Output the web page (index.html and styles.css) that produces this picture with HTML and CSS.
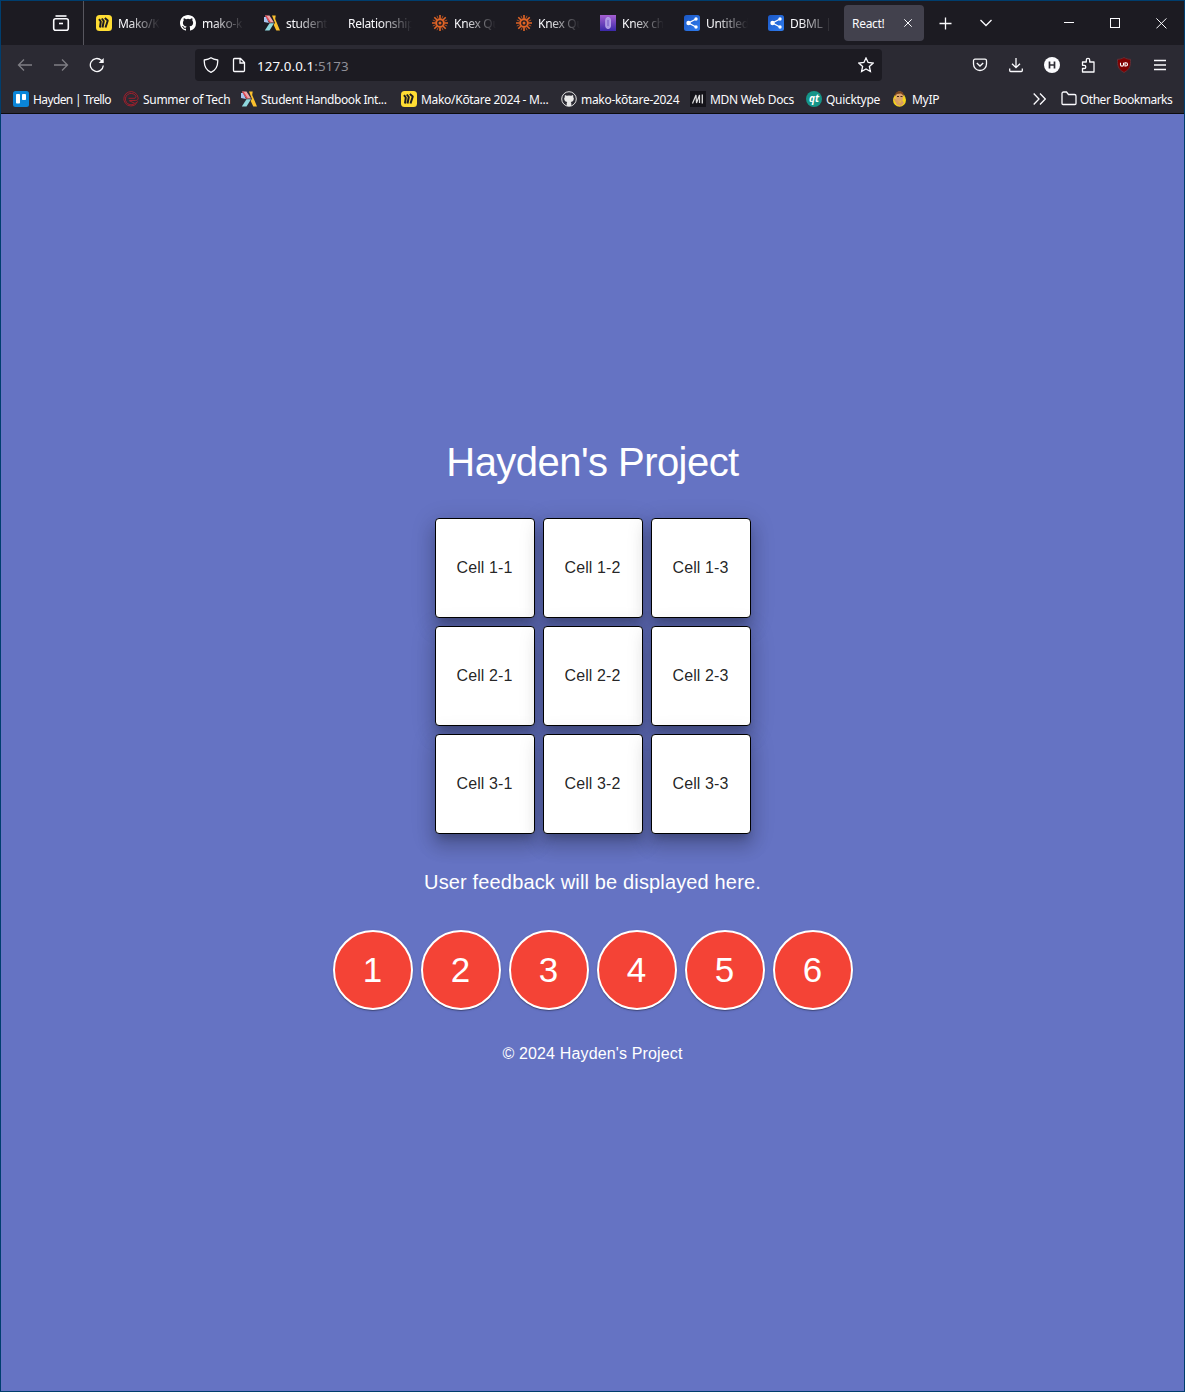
FILE: index.html
```html
<!DOCTYPE html>
<html lang="en">
<head>
<meta charset="utf-8">
<title>React!</title>
<link rel="stylesheet" href="styles.css">
</head>
<body>
<svg class="defs" width="0" height="0">
  <defs>
    <linearGradient id="violet" x1="0" y1="0" x2="0" y2="1"><stop offset="0" stop-color="#a45fd0"/><stop offset="1" stop-color="#3a28a8"/></linearGradient>
    <linearGradient id="azure" x1="0" y1="0" x2="1" y2="1"><stop offset="0" stop-color="#1b57c4"/><stop offset="1" stop-color="#2f7df0"/></linearGradient>
    <symbol id="miro" viewBox="0 0 16 16"><rect width="16" height="16" rx="3.500" fill="#ffdd33"/><path d="M3 4.200L4.800 6.500 4 12.500M5.800 3.500L7.800 6 6.500 12.500M8.800 3L11.800 5.500 9.500 12.500" fill="none" stroke="#1c1b22" stroke-width="2" stroke-linejoin="bevel"/></symbol>
    <symbol id="octo" viewBox="0 0 16 16"><path fill="#fff" d="M8 0C3.580 0 0 3.580 0 8c0 3.540 2.290 6.530 5.470 7.590.4.070.55-.17.55-.38 0-.19-.01-.82-.01-1.490-2.010.37-2.530-.49-2.690-.94-.09-.23-.48-.94-.82-1.130-.28-.15-.68-.52-.01-.53.63-.01 1.080.58 1.230.82.72 1.210 1.870.87 2.330.66.07-.52.28-.87.51-1.070-1.780-.2-3.640-.89-3.640-3.950 0-.87.31-1.590.82-2.150-.08-.2-.36-1.020.08-2.120 0 0 .67-.21 2.200.82a7.600 7.600 0 0 1 4 0c1.530-1.040 2.200-.82 2.200-.82.44 1.100.16 1.920.08 2.120.51.56.82 1.270.82 2.150 0 3.070-1.870 3.750-3.650 3.950.29.25.54.73.54 1.480 0 1.070-.01 1.930-.01 2.200 0 .21.15.46.55.38A8.010 8.010 0 0 0 16 8c0-4.420-3.580-8-8-8z"/></symbol>
    <symbol id="academy" viewBox="0 0 16 16"><path fill="#a9c4ee" d="M0 2h2l3 6-5-1z"/><path fill="#f0a3a8" d="M1 .5h4.500l4.500 7H5.500z"/><path fill="#e0424d" d="M1 .5h1.500L7 7.500H5.500z"/><path fill="#8fd8de" d="M5.500 8.200H10L5.500 15.500H.8z"/><path fill="#fbc02d" d="M8 .5h3.700l-.5 3.500L16 15.500h-3.700L9.700 10l1.200-2.300z"/></symbol>
    <symbol id="star8" viewBox="0 0 16 16"><g stroke="#e16426" fill="none"><path d="M8 0v4M8 12v4M0 8h4M12 8h4M2.300 2.300l3 3M10.700 10.700l3 3M13.700 2.300l-3 3M5.300 10.700l-3 3" stroke-width="1.600"/><path d="M5 .8l1.500 3.600M11 .8L9.500 4.400M5 15.200l1.500-3.600M11 15.200l-1.500-3.600M.8 5l3.600 1.500M.8 11l3.600-1.500M15.200 5l-3.600 1.500M15.200 11l-3.600-1.500" stroke-width=".7"/><circle cx="8" cy="8" r="3.700" stroke-width="1.700"/></g><circle cx="8" cy="8" r="1.500" fill="#e16426"/></symbol>
    <symbol id="share" viewBox="0 0 16 16"><rect width="16" height="16" rx="2.500" fill="url(#azure)"/><path d="M12 4L4.500 8l7.500 4" fill="none" stroke="#fff" stroke-width="1.300"/><g fill="#fff"><circle cx="12" cy="4" r="1.700"/><circle cx="4.500" cy="8" r="2.200"/><circle cx="12" cy="12" r="1.700"/></g></symbol>
  </defs>
</svg>
<div class="window">
  <div class="tabstrip">
    <div class="view"><svg width="18" height="18" viewBox="0 0 18 18" class="line"><path d="M3.500 2h11" stroke-width="1.600"/><rect x="1.700" y="4.700" width="14.600" height="11.600" rx="2" stroke-width="1.600"/><path d="M7 9.500h4" stroke-width="1.600"/></svg></div>
    <div class="tabs">
      <div class="tab"><svg class="fav"><use href="#miro"/></svg><span>Mako/K</span></div>
      <div class="tab"><svg class="fav"><use href="#octo"/></svg><span>mako-k</span></div>
      <div class="tab"><svg class="fav"><use href="#academy"/></svg><span>student</span></div>
      <div class="tab"><span>Relationship</span></div>
      <div class="tab"><svg class="fav"><use href="#star8"/></svg><span>Knex Qu</span></div>
      <div class="tab"><svg class="fav"><use href="#star8"/></svg><span>Knex Qu</span></div>
      <div class="tab"><svg class="fav" viewBox="0 0 16 16"><rect width="16" height="16" fill="url(#violet)"/><rect x="5.800" y="2.500" width="4.600" height="11" rx="2.300" fill="#a995e2" stroke="#b9a8ea"/><path d="M8 5v6" stroke="#7458c4"/></svg><span>Knex ch</span></div>
      <div class="tab"><svg class="fav"><use href="#share"/></svg><span>Untitled</span></div>
      <div class="tab"><svg class="fav"><use href="#share"/></svg><span>DBML |</span></div>
      <div class="tab active"><b>React!</b><svg width="8" height="8" viewBox="0 0 8 8" class="line thin"><path d="M.3.3l7.400 7.400M7.700.3L.3 7.700"/></svg></div>
    </div>
    <svg class="plus line" width="13" height="13" viewBox="0 0 13 13"><path d="M6.500.5v12M.5 6.500h12" stroke-width="1.300"/></svg>
    <svg class="down line" width="12" height="8" viewBox="0 0 12 8"><path d="M.5 1L6 6.500 11.500 1" stroke-width="1.300"/></svg>
    <div class="controls">
      <svg width="10" height="10" class="line thin"><path d="M0 4.500h10"/></svg>
      <svg width="10" height="10" class="line thin"><rect x=".5" y=".5" width="9" height="9"/></svg>
      <svg width="11" height="11" class="line thin"><path d="M.4.4l10 10M10.400.4l-10 10"/></svg>
    </div>
  </div>
  <div class="navbar">
    <div class="history">
      <svg width="16" height="16" class="line dim"><path d="M15 8H1.500M7 2.500L1.500 8 7 13.500"/></svg>
      <svg width="16" height="16" class="line dim"><path d="M1 8h13.500M9 2.500L14.500 8 9 13.500"/></svg>
      <svg width="16" height="16" class="line"><path d="M14.300 8.500a6.500 6.500 0 1 1-2-5.200L14 5"/><path d="M14.700 1v5H9.700z" fill="#fbfbfe" stroke="none"/></svg>
    </div>
    <div class="address">
      <svg width="16" height="16" class="line"><path d="M8 .8C6 2.200 3.500 2.700 1.300 3c-.3 5 1 10 6.700 12.300C13.700 13 15 8 14.700 3 12.500 2.700 10 2.200 8 .8z"/></svg>
      <svg width="16" height="16" class="line file"><path d="M3.500 1.500h6l4 4v8a1 1 0 0 1-1 1h-9a1 1 0 0 1-1-1v-11a1 1 0 0 1 1-1zM9 1.500V6h4.500"/></svg>
      <span class="url">127.0.0.1<i>:5173</i></span>
      <svg width="16" height="16" class="line"><path d="M8 1l2.100 4.500 5 .6-3.700 3.400 1 5L8 12l-4.400 2.500 1-5L.9 6.100l5-.6z"/></svg>
    </div>
    <div class="tools">
      <svg width="16" height="16" class="line"><path d="M3 2.200h10a1.500 1.500 0 0 1 1.500 1.500V7a6.500 6.500 0 0 1-13 0V3.700A1.500 1.500 0 0 1 3 2.200zM4.800 6L8 9 11.200 6"/></svg>
      <svg width="16" height="16" class="line"><path d="M8 1v9.500M4 6.700l4 4 4-4M1.700 11.500v2a1 1 0 0 0 1 1h10.600a1 1 0 0 0 1-1v-2"/></svg>
      <svg width="16" height="16"><circle cx="8" cy="8" r="8" fill="#fbfbfe"/><path d="M5.500 4.500v7M10.500 4.500v7M5.500 8h5" stroke="#2b2a33" stroke-width="1.700"/></svg>
      <svg width="16" height="16" class="line"><path d="M2.500 15V11.500h1.700a1.600 1.600 0 0 0 0-3.200H2.500V5h3.800V3a1.700 1.700 0 0 1 3.400 0v2H14v10z" stroke-linejoin="round"/></svg>
      <svg width="16" height="16"><path d="M8 .5c2 1.200 4.300 1.800 6.500 1.800 0 6 0 9.700-6.500 13.200C1.500 12 1.500 8.300 1.500 2.300c2.200 0 4.500-.6 6.500-1.800z" fill="#800000" stroke="#5f3038"/><path d="M4.500 5.700v2q0 1.400 1.500 1.400t1.500-1.400v-2M9 5.800h.9a1.600 1.600 0 0 1 0 3.200H9z" fill="none" stroke="#fff" stroke-width="1.100"/></svg>
      <svg width="16" height="16" class="line"><path d="M2 3.500h12M2 8h12M2 12.500h12"/></svg>
    </div>
  </div>
  <div class="bookmarks">
    <div class="mark trello"><svg class="fav" viewBox="0 0 16 16"><rect width="16" height="16" rx="2.500" fill="#0a85d8"/><rect x="3" y="3" width="4" height="9.500" rx=".8" fill="#fff"/><rect x="9" y="3" width="4" height="6" rx=".8" fill="#fff"/></svg>Hayden | Trello</div>
    <div class="mark"><svg class="fav" viewBox="0 0 16 16" fill="none" stroke="#ab1e2b" stroke-width=".9"><path d="M13.500 12.500A7.200 7.200 0 1 1 15.200 7c0 1.700-1 2.500-2.500 2.500H7"/><path d="M11 13A5.700 5.700 0 1 1 12.500 4.500c1.200 1.800 0 2.800-1.500 2.800H5.500"/><path d="M6 9.500l6 3 3-2"/></svg>Summer of Tech</div>
    <div class="mark student"><svg class="fav"><use href="#academy"/></svg>Student Handbook Int...</div>
    <div class="mark"><svg class="fav"><use href="#miro"/></svg>Mako/Kōtare 2024 - M...</div>
    <div class="mark"><svg class="fav" viewBox="0 0 16 16"><circle cx="8" cy="8" r="7.300" fill="#2b2a33" stroke="#ddd" stroke-width="1"/><path d="M4 4l1.800.8q2.200-.5 4.400 0L12 4q.5 1 .2 2 1.200 1.500.3 3.200-.8 1.600-2.700 1.700.5.600.5 1.600V15H5.700v-2.500q0-1 .5-1.600-1.900-.1-2.700-1.700Q2.600 7.500 3.800 6q-.3-1 .2-2z" fill="#e8e8e8"/></svg>mako-kōtare-2024</div>
    <div class="mark"><svg class="fav" viewBox="0 0 16 16"><rect width="16" height="16" fill="#15141a"/><path d="M2.500 12.500L6 4 6.500 12 9.500 4 9.500 12" fill="none" stroke="#ddd" stroke-width="1.200"/><path d="M12.300 3.500v9" stroke="#ddd" stroke-width="1.300"/></svg>MDN Web Docs</div>
    <div class="mark"><svg class="fav" viewBox="0 0 16 16"><circle cx="8" cy="8" r="8" fill="#159588"/><text x="8" y="11" class="qt">qt</text></svg>Quicktype</div>
    <div class="mark"><svg class="fav" viewBox="0 0 16 16"><ellipse cx="7.500" cy="9" rx="6.500" ry="6.800" fill="#f3d51b"/><path d="M3.500 6C3.500-1 11.500-1 11.500 5l-1 4-3 2-3-2z" fill="#dba36d"/><path d="M2.500 5.500C3-1.500 12-1.500 12 5L9 2.500 5 3z" fill="#7b461e"/><path d="M1 7l3 1 4 4 2-3 2 3-3 3-4-1z" fill="#d99d62"/><path d="M5 5.500h2M8.500 5.500h2" stroke="#402817"/></svg>MyIP</div>
    <svg class="more line" width="13" height="12" viewBox="0 0 13 12"><path d="M.7.5L6 6 .7 11.500M7 .5L12.300 6 7 11.500"/></svg>
    <div class="mark other"><svg class="fav line" viewBox="0 0 16 16"><path d="M1 12.500v-10A1.500 1.500 0 0 1 2.500 1h3l2 2.500h6A1.500 1.500 0 0 1 15 5v7.500a1 1 0 0 1-1 1H2a1 1 0 0 1-1-1z"/></svg>Other Bookmarks</div>
  </div>
  <main class="page">
    <h1>Hayden's Project</h1>
    <div class="grid">
      <div class="cell">Cell 1-1</div><div class="cell">Cell 1-2</div><div class="cell">Cell 1-3</div>
      <div class="cell">Cell 2-1</div><div class="cell">Cell 2-2</div><div class="cell">Cell 2-3</div>
      <div class="cell">Cell 3-1</div><div class="cell">Cell 3-2</div><div class="cell">Cell 3-3</div>
    </div>
    <p class="feedback">User feedback will be displayed here.</p>
    <div class="buttons">
      <button>1</button><button>2</button><button>3</button><button>4</button><button>5</button><button>6</button>
    </div>
    <footer>© 2024 Hayden's Project</footer>
  </main>
</div>
</body>
</html>
```
FILE: styles.css
```css
* { box-sizing: border-box; }
body { margin: 0; background: #6573c3; }
.defs { display: block; height: 0; }
.window {
  height: 1392px;
  border: 1px solid #003e6e;
  display: flex;
  flex-direction: column;
  overflow: hidden;
  font: 12px/18px "Noto Sans", sans-serif;
  letter-spacing: -0.3px;
  color: #fbfbfe;
}
svg { flex: none; display: block; }
.line { fill: none; stroke: #fbfbfe; stroke-width: 1.3; }
.thin { stroke-width: 1; }
.dim { opacity: 0.4; }
.fav { width: 16px; height: 16px; }

.tabstrip { flex: none; height: 44px; background: #1c1b22; display: flex; align-items: center; }
.view { width: 83px; height: 44px; padding: 13px 0 0 51px; border-right: 1px solid #57565e; }
.tabs { display: flex; padding-left: 2px; }
.tab {
  width: 80px;
  height: 36px;
  margin: 0 2px;
  padding: 0 8px;
  display: flex;
  align-items: center;
  gap: 6px;
  border-radius: 4px;
}
.tab span {
  flex: 1;
  min-width: 0;
  padding-top: 2px;
  white-space: nowrap;
  mask-image: linear-gradient(to left, transparent, #000 32px);
}
.tab b { padding-top: 2px; font-weight: 400; }
.tab.active { background: #42414d; justify-content: space-between; padding-right: 12px; }
.plus { margin-left: 13px; }
.down { margin-left: 28px; }
.controls { flex: 1; display: flex; justify-content: flex-end; align-items: center; gap: 36px; padding-right: 17px; }

.navbar { flex: none; height: 40px; background: #2b2a33; display: flex; align-items: center; }
.history { display: flex; gap: 20px; padding-left: 16px; width: 194px; }
.address {
  width: 687px;
  height: 32px;
  padding: 0 8px;
  display: flex;
  align-items: center;
  background: #1c1b22;
  border-radius: 4px;
}
.file { margin-left: 12px; }
.url { flex: 1; margin-left: 10px; padding-top: 1px; font-size: 13.3px; letter-spacing: 0.1px; }
.url i { font-style: normal; color: #8f8f98; }
.tools { display: flex; gap: 20px; margin-left: 90px; }

.bookmarks {
  flex: none;
  height: 29px;
  background: #2b2a33;
  border-bottom: 1px solid #0c0c0d;
  padding-left: 12px;
  display: grid;
  grid-template-columns: 110px 118px 160px 160px 129px 116px 86px 141px 28px 115px;
  align-items: center;
}
.mark { display: flex; align-items: center; gap: 4px; line-height: 19px; white-space: nowrap; }
.mark.trello { letter-spacing: -0.62px; }
.mark.student { letter-spacing: -0.4px; }
.mark.other { gap: 3px; letter-spacing: -0.5px; }
.qt { font: italic bold 10px "Open Sans", sans-serif; fill: #fff; text-anchor: middle; letter-spacing: 0; }

.page {
  flex: 1;
  padding-top: 324px;
  display: flex;
  flex-direction: column;
  align-items: center;
  background: #6573c3;
  font-family: "Liberation Sans", Arial, sans-serif;
  color: #fff;
}
h1 { margin: 0; font-weight: 400; font-size: 40px; line-height: 48px; letter-spacing: -0.55px; }
.grid { margin: 32px 0 0 1px; display: grid; grid-template-columns: repeat(3, 100px); gap: 8px; }
.cell {
  height: 100px;
  display: flex;
  align-items: center;
  justify-content: center;
  background: #fff;
  border: 1px solid #000;
  border-radius: 4px;
  padding-right: 1px;
  font-size: 16px;
  line-height: 24px;
  letter-spacing: 0.1px;
  color: rgba(0, 0, 0, 0.87);
  box-shadow: 0 7px 8px -4px rgba(0, 0, 0, 0.2), 0 12px 17px 2px rgba(0, 0, 0, 0.14), 0 5px 22px 4px rgba(0, 0, 0, 0.12);
}
.feedback { margin: 32px 0; font-size: 20px; line-height: 32px; letter-spacing: 0.15px; }
.buttons { display: flex; gap: 8px; padding-left: 1px; }
button {
  width: 80px;
  height: 80px;
  padding: 0 1px 0 0;
  border: 2px solid #fff;
  border-radius: 50%;
  background: #f44336;
  color: #fff;
  font: 35px/42px "Liberation Sans", Arial, sans-serif;
  box-shadow: 0 2px 1px -1px rgba(0, 0, 0, 0.2), 0 1px 1px rgba(0, 0, 0, 0.14), 0 1px 3px rgba(0, 0, 0, 0.12);
}
footer { margin-top: 32px; font-size: 16px; line-height: 24px; letter-spacing: 0.15px; }
```
